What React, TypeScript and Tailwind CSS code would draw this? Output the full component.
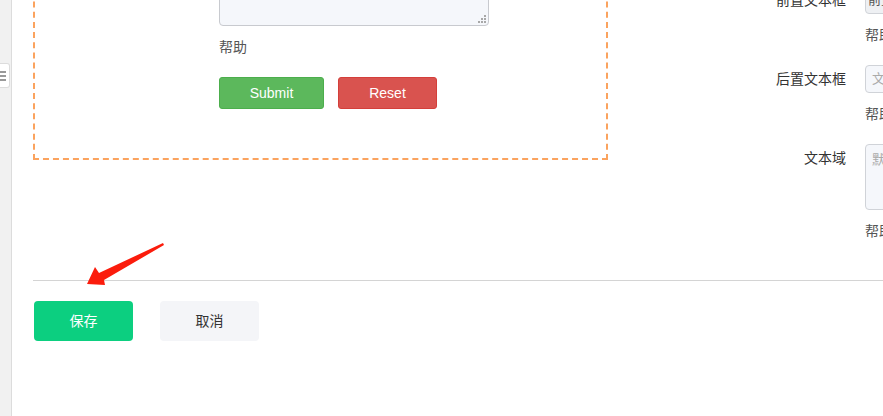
import React from "react";

const font = { fontFamily: '"Liberation Sans", "Noto Sans CJK SC", sans-serif' };

function FormRow({ label, children, last }: { label: string; children: React.ReactNode; last?: boolean }) {
  return (
    <div className={last ? "flex" : "flex mb-[20px]"}>
      <div className="w-[257px] shrink-0 pr-[19px] text-right text-[14px] leading-[28px] text-[#333]">{label}</div>
      <div className="w-[300px] shrink-0">
        {children}
        <div className="mt-[11px] text-[14px] leading-[20px] text-[#555]">帮助</div>
      </div>
    </div>
  );
}

export default function App() {
  return (
    <div className="w-[883px] h-[416px] overflow-hidden flex bg-white" style={font}>
      <div className="relative w-[12px] shrink-0 bg-[#f1f1f1] border-r border-[#dcdcdc]">
        <div className="absolute left-0 top-[63px] w-[10px] h-[25px] bg-white border border-l-0 border-[#dcdcdc] rounded-r-[3px] flex flex-col justify-center gap-[2px]">
          <div className="w-[6px] h-[2px] bg-[#999]" />
          <div className="w-[6px] h-[2px] bg-[#999]" />
          <div className="w-[6px] h-[2px] bg-[#999]" />
        </div>
      </div>
      <div className="relative flex-1 min-w-0">
        <div className="flex items-start mt-[-100px] pl-[21px]">
          <div className="w-[575px] shrink-0 h-[260px] border-2 border-dashed border-[#fba35e] pt-[24px] pl-[184px]">
            <div className="relative w-[270px] h-[100px]">
              <textarea
                readOnly
                className="block w-full h-full resize-none bg-[#f5f7fb] border border-[#c8cacf] rounded-[4px] outline-none"
              />
              <svg className="absolute right-[2px] bottom-[2px]" width="9" height="9" viewBox="0 0 9 9">
                <rect x="6" y="0" width="2" height="2" fill="#a8a8a8" />
                <rect x="3" y="3" width="2" height="2" fill="#a8a8a8" />
                <rect x="6" y="3" width="2" height="2" fill="#a8a8a8" />
                <rect x="0" y="6" width="2" height="2" fill="#a8a8a8" />
                <rect x="3" y="6" width="2" height="2" fill="#a8a8a8" />
                <rect x="6" y="6" width="2" height="2" fill="#a8a8a8" />
              </svg>
            </div>
            <div className="mt-[11px] text-[14px] leading-[20px] text-[#555]">帮助</div>
            <div className="flex gap-[14px] mt-[20px]">
              <button className="w-[105px] h-[32px] rounded-[3px] bg-[#5cb85c] border border-[#4cae4c] text-white text-[14px]">Submit</button>
              <button className="w-[99px] h-[32px] rounded-[3px] bg-[#d9534f] border border-[#d43f3a] text-white text-[14px]">Reset</button>
            </div>
          </div>
          <div className="shrink-0 pt-[86px]">
            <FormRow label="前置文本框">
              <div className="h-[28px] border border-[#d0d3d8] rounded-[4px] bg-[#eef0f3] flex items-center pl-[2px] text-[13px] text-[#555]">前置</div>
            </FormRow>
            <FormRow label="后置文本框">
              <div className="h-[28px] border border-[#d0d3d8] rounded-[4px] bg-[#f5f7fb] flex items-center pl-[6px] text-[13px] text-[#aaa]">文本框</div>
            </FormRow>
            <FormRow label="文本域" last>
              <div className="h-[66px] border border-[#d0d3d8] rounded-[4px] bg-[#f5f7fb] pl-[6px] pt-[6px] text-[13px] leading-[18px] text-[#aaa]">默认文本</div>
            </FormRow>
          </div>
        </div>
        <div className="ml-[21px] mt-[39px] h-px bg-[#d4d4d4]" />
        <div className="ml-[22px] mt-[20px] flex gap-[27px]">
          <button className="w-[99px] h-[40px] rounded-[4px] bg-[#0ccf80] text-white text-[14px]">保存</button>
          <button className="w-[99px] h-[40px] rounded-[4px] bg-[#f4f5f8] text-[#333] text-[14px]">取消</button>
        </div>
        <svg className="absolute left-[-12px] top-0 pointer-events-none" width="200" height="300" viewBox="0 0 200 300">
          <polygon points="87,284 95,267 99,273 163,243 164,245 104,280 105,285" fill="#fb1c0c" />
        </svg>
      </div>
    </div>
  );
}
